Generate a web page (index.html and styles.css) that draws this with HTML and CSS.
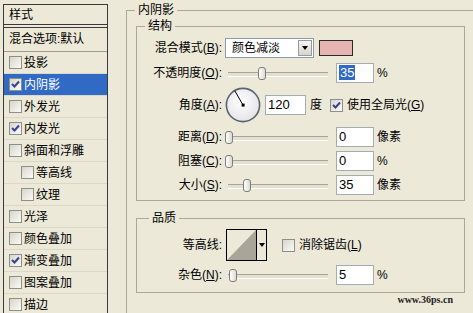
FILE: index.html
```html
<!DOCTYPE html>
<html lang="zh-CN">
<head>
    <meta charset="UTF-8">
    <title>图层样式 - 内阴影</title>
    <link rel="stylesheet" href="styles.css">
</head>
<body>
    <div id="dialog">
        <div id="styles">
            <div class="styles-head">样式</div>
            <div class="styles-list">
                <div class="blend-item">混合选项:默认</div>
                <div class="style-item"><span class="check"></span>投影</div>
                <div class="style-item active"><span class="check"><svg viewBox="0 0 11 11" width="11" height="11"><path d="M2 5 L4.5 7.5 L9 2.5" fill="none" stroke="#3a3f8f" stroke-width="2"/></svg></span>内阴影</div>
                <div class="style-item"><span class="check"></span>外发光</div>
                <div class="style-item"><span class="check"><svg viewBox="0 0 11 11" width="11" height="11"><path d="M2 5 L4.5 7.5 L9 2.5" fill="none" stroke="#3a3f8f" stroke-width="2"/></svg></span>内发光</div>
                <div class="style-item"><span class="check"></span>斜面和浮雕</div>
                <div class="style-item sub"><span class="check"></span>等高线</div>
                <div class="style-item sub"><span class="check"></span>纹理</div>
                <div class="style-item"><span class="check"></span>光泽</div>
                <div class="style-item"><span class="check"></span>颜色叠加</div>
                <div class="style-item"><span class="check"><svg viewBox="0 0 11 11" width="11" height="11"><path d="M2 5 L4.5 7.5 L9 2.5" fill="none" stroke="#3a3f8f" stroke-width="2"/></svg></span>渐变叠加</div>
                <div class="style-item"><span class="check"></span>图案叠加</div>
                <div class="style-item"><span class="check"></span>描边</div>
            </div>
        </div>

        <div id="panel">
            <div class="group outer">
                <span class="group-title">内阴影</span>

                <!-- 结构 -->
                <div class="group inner structure">
                    <span class="group-title">结构</span>
                    <div class="group-body">
                        <div class="row r-blend">
                            <span class="lbl">混合模式(<u>B</u>):</span>
                            <div class="select">
                                <span class="select-text">颜色减淡</span>
                                <span class="select-btn"><i class="arrow"></i></span>
                            </div>
                            <span class="swatch"></span>
                        </div>
                        <div class="row">
                            <span class="lbl">不透明度(<u>O</u>):</span>
                            <div class="slider"><span class="thumb" style="left:30px"></span></div>
                            <div class="num"><span class="sel">35</span></div>
                            <span class="unit">%</span>
                        </div>
                        <div class="row r-angle">
                            <span class="lbl">角度(<u>A</u>):</span>
                            <svg class="dial" width="36" height="36" viewBox="0 0 36 36">
                                <defs>
                                    <radialGradient id="dialFill" cx="45%" cy="40%" r="65%">
                                        <stop offset="0" stop-color="#ffffff"/>
                                        <stop offset="1" stop-color="#e2e2e6"/>
                                    </radialGradient>
                                </defs>
                                <circle cx="18" cy="18" r="16.6" fill="url(#dialFill)" stroke="#5c6272" stroke-width="1.6"/>
                                <line x1="18" y1="18" x2="9.8" y2="3.8" stroke="#000" stroke-width="1"/>
                                <rect x="16.6" y="16.6" width="3" height="3" fill="#000"/>
                            </svg>
                            <div class="num wide">120</div>
                            <span class="unit deg">度</span>
                            <span class="check global"><svg viewBox="0 0 11 11" width="11" height="11"><path d="M2 5 L4.5 7.5 L9 2.5" fill="none" stroke="#3a3f8f" stroke-width="2"/></svg></span>
                            <span class="check-label">使用全局光(<u>G</u>)</span>
                        </div>
                        <div class="row">
                            <span class="lbl">距离(<u>D</u>):</span>
                            <div class="slider"><span class="thumb" style="left:-3px"></span></div>
                            <div class="num">0</div>
                            <span class="unit">像素</span>
                        </div>
                        <div class="row">
                            <span class="lbl">阻塞(<u>C</u>):</span>
                            <div class="slider"><span class="thumb" style="left:-3px"></span></div>
                            <div class="num">0</div>
                            <span class="unit">%</span>
                        </div>
                        <div class="row">
                            <span class="lbl">大小(<u>S</u>):</span>
                            <div class="slider"><span class="thumb" style="left:15px"></span></div>
                            <div class="num">35</div>
                            <span class="unit">像素</span>
                        </div>
                    </div>
                </div>

                <!-- 品质 -->
                <div class="group inner quality">
                    <span class="group-title">品质</span>
                    <div class="group-body">
                        <div class="row r-contour">
                            <span class="lbl">等高线:</span>
                            <div class="contour">
                                <svg width="29" height="30" viewBox="0 0 29 30">
                                    <polygon points="0,30 29,0 29,30" fill="#a9a598"/>
                                </svg>
                                <span class="contour-btn"><i class="arrow"></i></span>
                            </div>
                            <span class="check antialias"></span>
                            <span class="check-label">消除锯齿(<u>L</u>)</span>
                        </div>
                        <div class="row">
                            <span class="lbl">杂色(<u>N</u>):</span>
                            <div class="slider"><span class="thumb" style="left:1px"></span></div>
                            <div class="num">5</div>
                            <span class="unit">%</span>
                        </div>
                    </div>
                </div>

                <div class="watermark">www.36ps.cn</div>
            </div>
        </div>
    </div>
</body>
</html>
```

FILE: styles.css
```css
* {
    margin: 0;
    padding: 0;
    box-sizing: border-box;
}

body {
    width: 473px;
    height: 313px;
    overflow: hidden;
    background: #ece9d8;
    color: #000;
    font: 12px/14px "Liberation Sans", "Noto Sans CJK SC", sans-serif;
}

#dialog {
    display: flex;
    align-items: flex-start;
}

/* left style list */
#styles {
    flex: none;
    width: 105px;
    margin: 4px 0 0 3px;
    border: 1px solid #3a3a3a;
    border-bottom: none;
}

.styles-head {
    height: 20px;
    line-height: 20px;
    padding-left: 5px;
    border-bottom: 1px solid #3a3a3a;
}

.styles-list {
    margin-top: 2px;
    border-top: 1px solid #3a3a3a;
}

.blend-item {
    height: 24px;
    line-height: 23px;
    padding-left: 5px;
    white-space: nowrap;
    border-bottom: 1px solid #a09c8c;
}

.style-item {
    height: 22px;
    display: flex;
    align-items: center;
    padding-left: 5px;
    white-space: nowrap;
    border-bottom: 1px solid #dcd8c9;
}

.style-item.sub {
    padding-left: 17px;
}

.style-item.active {
    background: #316ac5;
    color: #fff;
}

.check {
    flex: none;
    width: 13px;
    height: 13px;
    margin-right: 2px;
    border: 1px solid #8e8e8a;
    background: linear-gradient(135deg, #d6d5cc, #fbfbf8);
    display: flex;
    align-items: center;
    justify-content: center;
}

/* right panel */
#panel {
    flex: none;
    margin-left: 18px;
}

.group {
    display: flex;
    flex-direction: column;
    align-items: flex-start;
    border: 1px solid #aca899;
}

.group-title {
    display: block;
    height: 14px;
    margin: -8px 0 0 8px;
    padding: 0 3px;
    background: #ece9d8;
}

.outer {
    width: 370px;
    height: 330px;
    margin-top: 10px;
}

.inner {
    flex: none;
    width: 329px;
    margin-left: 9px;
}

.structure {
    margin-top: 9px;
}

.quality {
    margin-top: 17px;
}

.quality .group-title {
    margin-left: 12px;
}

.group-body {
    align-self: stretch;
    display: flex;
    flex-direction: column;
    gap: 4px;
    padding: 5px 0 5px;
}

.quality .group-body {
    padding: 4px 0 7px;
}

.row {
    flex: none;
    height: 20px;
    display: flex;
    align-items: center;
    white-space: nowrap;
}

.r-blend {
    margin-bottom: 1px;
}

.r-angle {
    height: 36px;
}

.r-contour {
    height: 32px;
}

.lbl {
    flex: none;
    width: 85px;
    text-align: right;
}

u {
    text-decoration: underline;
}

.select {
    flex: none;
    width: 89px;
    height: 20px;
    margin-left: 3px;
    display: flex;
    align-items: center;
    border: 1px solid #8f9cae;
    background: #fff;
}

.select-text {
    flex: 1;
    padding-left: 6px;
}

.select-btn {
    width: 14px;
    height: 16px;
    margin-right: 1px;
    display: flex;
    align-items: center;
    justify-content: center;
    border: 1px solid #9a9a96;
    background: linear-gradient(#f7f7f5, #d4d3cc);
}

.arrow {
    width: 0;
    height: 0;
    border-left: 3px solid transparent;
    border-right: 3px solid transparent;
    border-top: 4px solid #000;
}

.swatch {
    flex: none;
    width: 34px;
    height: 16px;
    margin-left: 5px;
    border: 1px solid #2a2a2a;
    background: #e7b3b3;
}

.slider {
    flex: none;
    position: relative;
    width: 100px;
    height: 13px;
    margin-left: 6px;
}

.slider::before {
    content: '';
    position: absolute;
    left: 0;
    right: 0;
    top: 5px;
    height: 3px;
    border-top: 1px solid #a8a595;
    border-bottom: 1px solid #fff;
    background: #e2dfd3;
}

.thumb {
    position: absolute;
    top: 0;
    width: 8px;
    height: 13px;
    border: 1px solid #7d7d78;
    border-radius: 3px;
    background: linear-gradient(90deg, #fff, #dcdad2);
}

.num {
    flex: none;
    width: 38px;
    height: 20px;
    margin-left: 8px;
    padding-left: 2px;
    line-height: 18px;
    border: 1px solid #a3abb5;
    background: #fff;
    font-size: 13px;
}

.num.wide {
    width: 41px;
    margin-left: 4px;
}

.sel {
    background: #316ac5;
    color: #fff;
    padding: 0 1px;
}

.unit {
    margin-left: 3px;
}

.unit.deg {
    margin-left: 4px;
}

.dial {
    flex: none;
    margin-left: 3px;
}

.check.global {
    margin-left: 8px;
    margin-right: 0;
}

.check-label {
    margin-left: 4px;
}

.contour {
    flex: none;
    width: 41px;
    height: 32px;
    margin-left: 4px;
    display: flex;
    border: 1px solid #000;
    background: #ece9d8;
}

.contour svg {
    flex: none;
    border-right: 1px solid #000;
    width: 30px;
}

.contour-btn {
    flex: 1;
    display: flex;
    align-items: center;
    justify-content: center;
}

.check.antialias {
    margin-left: 15px;
    margin-right: 0;
}

.watermark {
    width: 328px;
    margin: 1px 0 0 9px;
    padding-right: 11px;
    text-align: right;
    font: bold 10px/12px "Liberation Serif", serif;
    color: #1e1e1e;
}
```
